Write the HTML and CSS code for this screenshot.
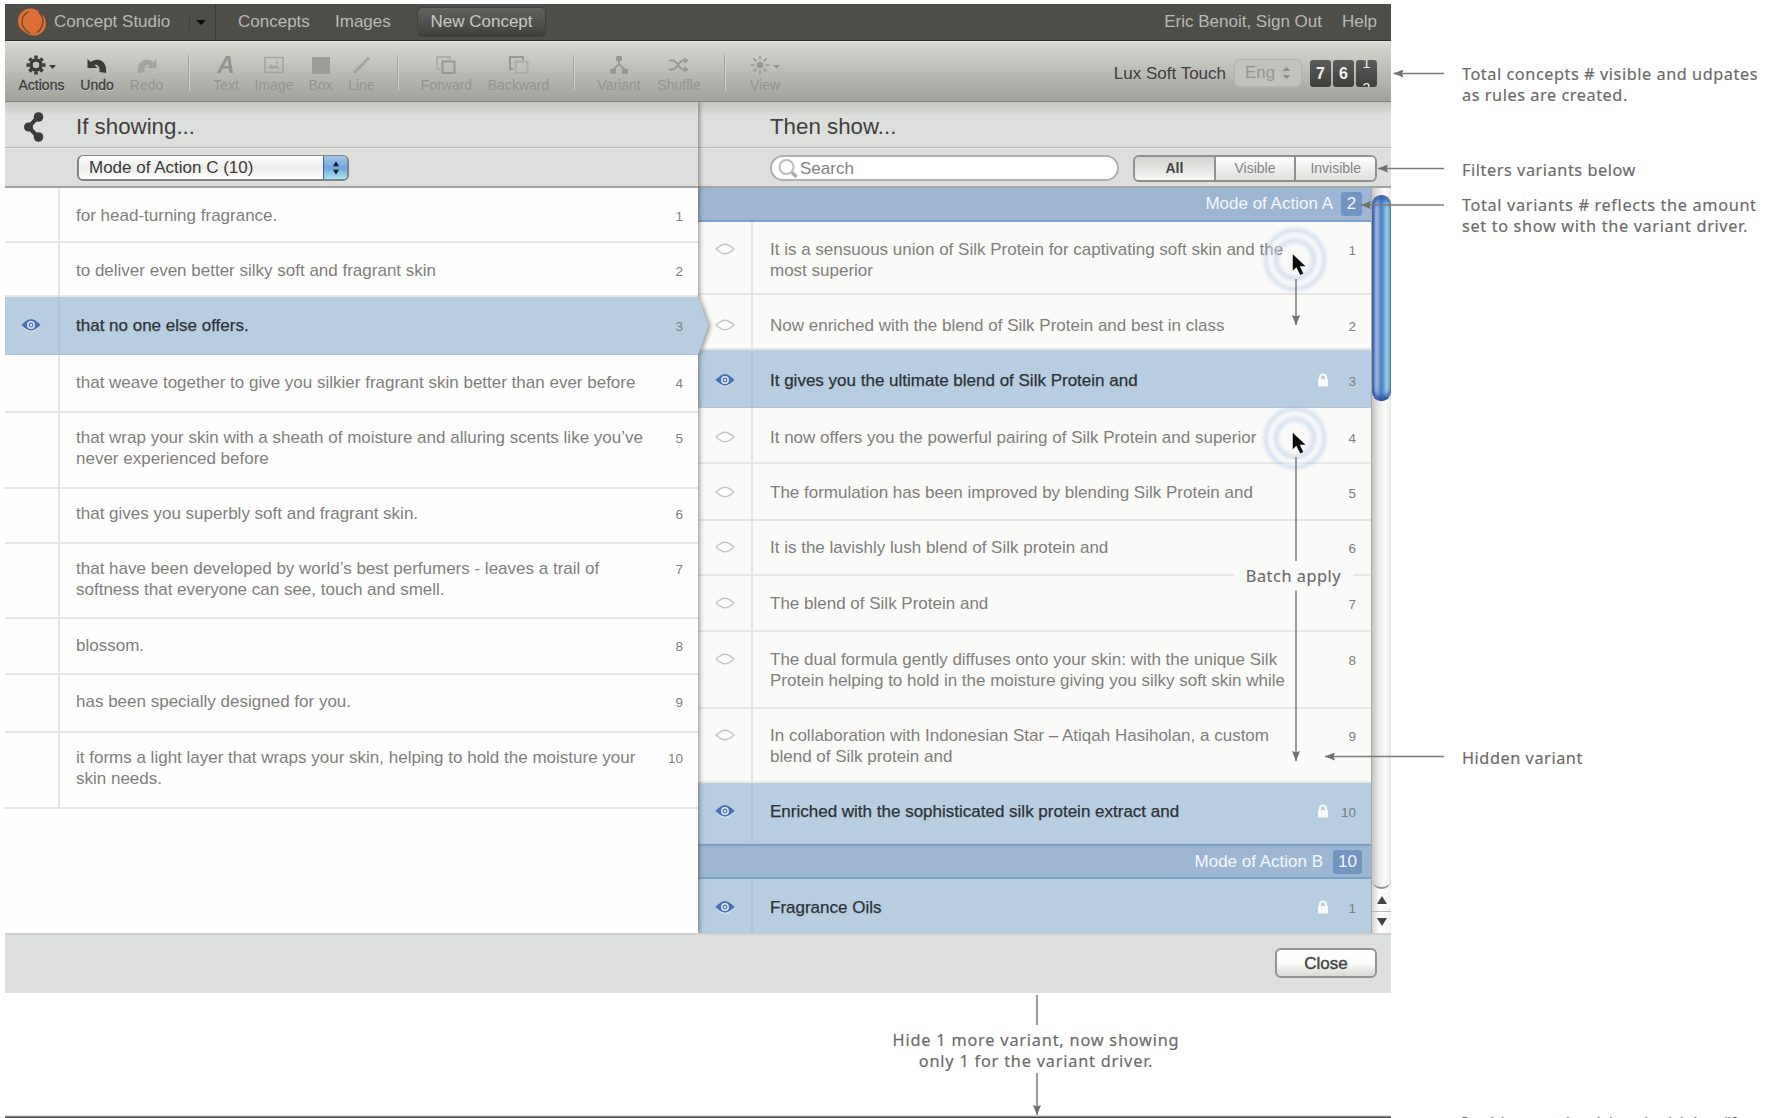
FILE: index.html
```html
<!DOCTYPE html>
<html lang="en">
<head>
<meta charset="utf-8">
<title>Concept Studio</title>
<link rel="stylesheet" href="styles.css">
</head>
<body>
<svg class="defs" width="0" height="0">
  <defs>
    <symbol id="eye" viewBox="0 0 20 14"><path d="M1 8.200C5 4.200 7 3 10 3s5 1.200 9 5.200C15 12.200 13 13.500 10 13.500S5 12.200 1 8.200Z" fill="#e6eff7"/><path d="M.5 7C4.500 3 7 1.300 10 1.300S15.500 3 19.500 7c-4 4-6.500 5.500-9.500 5.500S4.500 11 .5 7Z" fill="#4a70b0"/><circle cx="10" cy="7" r="3.200" fill="none" stroke="#dfe9f5" stroke-width="1.500"/><circle cx="10" cy="7" r="1.200" fill="#dfe9f5"/></symbol>
    <symbol id="eye-off" viewBox="0 0 20 14"><path d="M1 7C5 3.500 7.500 2.200 10 2.200S15 3.500 19 7c-4 3.500-6.500 4.800-9 4.800S5 10.500 1 7Z" fill="#fff" stroke="#c6c6c1" stroke-width="1.500"/></symbol>
    <symbol id="lock" viewBox="0 0 12 14"><path d="M1 6h1V4.500a4 4 0 0 1 8 0V6h1v7.500H1ZM4 6h4V4.500a2 2 0 0 0-4 0Z" fill="#f6fafd"/></symbol>
    <symbol id="cursor" viewBox="0 0 13 21"><path d="M0 0v17l3.800-3.700 4 7.700 3-1.500-3.500-7.200H13Z" fill="#0c0c0c"/></symbol>
  </defs>
</svg>

<div class="app">
  <nav class="topbar">
    <svg class="logo" width="30" height="28" viewBox="0 0 30 28"><circle cx="13.500" cy="13" r="12.500" fill="#df6f35"/><circle cx="17" cy="15.500" r="12" fill="#df6f35"/><g fill="none" stroke="#5b4436" stroke-width="1.200"><path d="M11.500 3.500C2 9 3 20 13.500 25.500M22 4.500c6 6 5 15-2 20"/></g></svg>
    <span class="brand">Concept Studio</span>
    <span class="brand-menu"><i class="caret"></i></span>
    <a class="link-concepts">Concepts</a>
    <a class="link-images">Images</a>
    <a class="new-concept">New Concept</a>
    <span class="account">Eric Benoit, Sign Out</span>
    <a>Help</a>
  </nav>

  <div class="toolbar">
    <div class="tools">
      <div class="tool on"><svg width="36" height="22" viewBox="0 0 36 22"><g transform="translate(13 11)" fill="none" stroke="#3b3b39"><circle r="5" stroke-width="3.500"/><path stroke-width="3.500" d="M0-9.500v3M0 9.500v-3M-9.500 0h3M9.500 0h-3M-6.600-6.600l2 2M6.600 6.600l-2-2M-6.600 6.600l2-2M6.600-6.600l-2 2"/></g><path d="M26 11h7l-3.500 4Z" fill="#3b3b39"/></svg>Actions</div>
      <div class="tool on"><svg width="22" height="22" viewBox="0 0 22 22"><path d="M1.500 5v9h10L8.500 11c3-.8 5.500 1.500 5 7l6.500 1C21.500 8.500 14 2 4.500 8Z" fill="#3b3b39"/></svg>Undo</div>
      <div class="tool"><svg width="22" height="22" viewBox="0 0 22 22"><path d="M20.500 5v9h-10L13.500 11c-3-.8-5.500 1.500-5 7L2 19C.5 8.500 8 2 17.500 8Z" fill="#a3a39f"/></svg>Redo</div>
      <i class="sep"></i>
      <div class="tool"><span class="glyph-a">A</span>Text</div>
      <div class="tool"><svg width="22" height="22" viewBox="0 0 22 22"><rect x="2" y="3.500" width="18" height="15" fill="none" stroke="#a3a39f" stroke-width="1.500"/><path d="M5 14.500l3-4 3 2.500 2-2 4 3.500Z" fill="#a3a39f"/><circle cx="14" cy="8.500" r="1.300" fill="#a3a39f"/></svg>Image</div>
      <div class="tool"><svg width="22" height="22" viewBox="0 0 22 22"><path d="M2 3h18v17H2Z" fill="#9c9c98"/></svg>Box</div>
      <div class="tool"><svg width="22" height="22" viewBox="0 0 22 22"><path d="M3 19L18 3.500" stroke="#a3a39f" stroke-width="3"/></svg>Line</div>
      <i class="sep"></i>
      <div class="tool"><svg width="22" height="22" viewBox="0 0 22 22" fill="none" stroke-width="2"><path d="M5 15H2V3h13v3" stroke="#adada9"/><rect x="7.500" y="7.500" width="12" height="11.500" stroke="#979793"/></svg>Forward</div>
      <div class="tool"><svg width="22" height="22" viewBox="0 0 22 22" fill="none" stroke-width="2"><path d="M5 15H2V3h13v3" stroke="#979793"/><rect x="7.500" y="7.500" width="12" height="11.500" stroke="#adada9"/></svg>Backward</div>
      <i class="sep"></i>
      <div class="tool"><svg width="22" height="22" viewBox="0 0 22 22"><g fill="#979793"><rect x="8" y="2" width="6" height="5" rx="1"/><rect x="2" y="15" width="6" height="5" rx="1"/><rect x="14" y="15" width="6" height="5" rx="1"/></g><path d="M11 6v5M5 16l6-6 6 6" fill="none" stroke="#979793" stroke-width="1.800"/></svg>Variant</div>
      <div class="tool"><svg width="22" height="22" viewBox="0 0 22 22"><path d="M1 6.500h4c4 0 6 9 10 9h2M1 15.500h4c4 0 6-9 10-9h2" fill="none" stroke="#979793" stroke-width="1.800"/><path d="M16 3.500l5 3-5 3ZM16 12.500l5 3-5 3Z" fill="#979793"/></svg>Shuffle</div>
      <i class="sep"></i>
      <div class="tool"><svg width="32" height="22" viewBox="0 0 32 22"><g transform="translate(11 11)"><circle r="3.300" fill="#979793"/><path d="M0-9.500v4M0 9.500v-4M-9.500 0h4M9.500 0h-4M-6.600-6.600l3 3M6.600 6.600l-3-3M-6.600 6.600l3-3M6.600-6.600l-3 3" stroke="#979793" stroke-width="1.600"/></g><path d="M24 11h7l-3.500 4Z" fill="#979793"/></svg>View</div>
    </div>
    <div class="project">
      <span class="project-name">Lux Soft Touch</span>
      <span class="lang">Eng<svg width="9" height="14" viewBox="0 0 9 14"><path d="M.5 5L4.500 1l4 4ZM.5 9l4 4 4-4Z" fill="#8d8d89"/></svg></span>
      <span class="counter"><b>7</b><b>6</b><b class="rolling"><i>1</i><i>2</i></b></span>
    </div>
  </div>

  <main class="panes">
    <section class="pane left">
      <h2><svg width="22" height="32" viewBox="0 0 22 32"><path d="M15 6L5.500 16 15 26" fill="none" stroke="#3b3b39" stroke-width="4"/><circle cx="15.500" cy="6" r="4.800" fill="#3b3b39"/><circle cx="5.500" cy="16" r="4.500" fill="#3b3b39"/><circle cx="15.500" cy="26" r="4.800" fill="#3b3b39"/></svg>If showing...</h2>
      <div class="controls">
        <div class="select"><span>Mode of Action C (10)</span><i><svg width="8" height="14" viewBox="0 0 8 14"><path d="M1 5.200L4 .5l3 4.700ZM1 8.800l3 4.700 3-4.700Z" fill="#111"/></svg></i></div>
      </div>
      <div class="rows">
        <div class="row"><div class="vis"></div><p>for head-turning fragrance.</p><span class="num">1</span></div>
        <div class="row"><div class="vis"></div><p>to deliver even better silky soft and fragrant skin</p><span class="num">2</span></div>
        <div class="row sel"><div class="vis"><svg><use href="#eye"/></svg></div><p>that no one else offers.</p><span class="num">3</span><svg class="notch" width="18" height="60" viewBox="0 0 18 60"><path d="M0 1L10.500 29.500 0 59Z" fill="#b7cde1"/></svg></div>
        <div class="row"><div class="vis"></div><p>that weave together to give you silkier fragrant skin better than ever before</p><span class="num">4</span></div>
        <div class="row"><div class="vis"></div><p>that wrap your skin with a sheath of moisture and alluring scents like you’ve<br>never experienced before</p><span class="num">5</span></div>
        <div class="row"><div class="vis"></div><p>that gives you superbly soft and fragrant skin.</p><span class="num">6</span></div>
        <div class="row"><div class="vis"></div><p>that have been developed by world’s best perfumers - leaves a trail of<br>softness that everyone can see, touch and smell.</p><span class="num">7</span></div>
        <div class="row"><div class="vis"></div><p>blossom.</p><span class="num">8</span></div>
        <div class="row"><div class="vis"></div><p>has been specially designed for you.</p><span class="num">9</span></div>
        <div class="row"><div class="vis"></div><p>it forms a light layer that wraps your skin, helping to hold the moisture your<br>skin needs.</p><span class="num">10</span></div>
      </div>
    </section>

    <section class="pane right">
      <h2>Then show...</h2>
      <div class="controls">
        <div class="search"><svg width="22" height="22" viewBox="0 0 22 22"><circle cx="9.500" cy="9" r="7" fill="none" stroke="#bdbdb9" stroke-width="2"/><path d="M14.500 14l5 5" stroke="#b3ada8" stroke-width="3.200"/></svg>Search</div>
        <div class="segments"><span class="active">All</span><span>Visible</span><span>Invisible</span></div>
      </div>
      <div class="list">
        <div class="rows">
          <div class="group">Mode of Action A<b>2</b></div>
          <div class="row"><div class="vis"><svg><use href="#eye-off"/></svg></div><p>It is a sensuous union of Silk Protein for captivating soft skin and the<br>most superior</p><span class="num">1</span></div>
          <div class="row"><div class="vis"><svg><use href="#eye-off"/></svg></div><p>Now enriched with the blend of Silk Protein and best in class</p><span class="num">2</span></div>
          <div class="row sel"><div class="vis"><svg><use href="#eye"/></svg></div><p>It gives you the ultimate blend of Silk Protein and</p><span class="num"><svg><use href="#lock"/></svg>3</span></div>
          <div class="row"><div class="vis"><svg><use href="#eye-off"/></svg></div><p>It now offers you the powerful pairing of Silk Protein and superior</p><span class="num">4</span></div>
          <div class="row"><div class="vis"><svg><use href="#eye-off"/></svg></div><p>The formulation has been improved by blending Silk Protein and</p><span class="num">5</span></div>
          <div class="row"><div class="vis"><svg><use href="#eye-off"/></svg></div><p>It is the lavishly lush blend of Silk protein and</p><span class="num">6</span></div>
          <div class="row"><div class="vis"><svg><use href="#eye-off"/></svg></div><p>The blend of Silk Protein and</p><span class="num">7</span></div>
          <div class="row"><div class="vis"><svg><use href="#eye-off"/></svg></div><p>The dual formula gently diffuses onto your skin: with the unique Silk<br>Protein helping to hold in the moisture giving you silky soft skin while</p><span class="num">8</span></div>
          <div class="row"><div class="vis"><svg><use href="#eye-off"/></svg></div><p>In collaboration with Indonesian Star – Atiqah Hasiholan, a custom<br>blend of Silk protein and</p><span class="num">9</span></div>
          <div class="row sel"><div class="vis"><svg><use href="#eye"/></svg></div><p>Enriched with the sophisticated silk protein extract and</p><span class="num"><svg><use href="#lock"/></svg>10</span></div>
          <div class="group">Mode of Action B<b>10</b></div>
          <div class="row sel"><div class="vis"><svg><use href="#eye"/></svg></div><p>Fragrance Oils</p><span class="num"><svg><use href="#lock"/></svg>1</span></div>
        </div>
        <div class="scrollbar">
          <div class="track"><div class="thumb"></div></div>
          <div class="step"><svg width="10" height="8" viewBox="0 0 10 8"><path d="M5 0l5 8H0Z" fill="#444"/></svg></div>
          <div class="step"><svg width="10" height="8" viewBox="0 0 10 8"><path d="M5 8L0 0h10Z" fill="#444"/></svg></div>
        </div>
      </div>
    </section>
  </main>

  <footer><button type="button">Close</button></footer>
</div>

<svg class="marks" width="1776" height="1118" viewBox="0 0 1776 1118">
  <defs>
    <marker id="head" viewBox="0 0 10 8" refX="10" refY="4" markerWidth="10" markerHeight="8" markerUnits="userSpaceOnUse" orient="auto"><path d="M10 4L0 0l1.500 4L0 8Z" fill="#6f6f6f"/></marker>
    <filter id="glow" x="-30%" y="-30%" width="160%" height="160%"><feGaussianBlur stdDeviation="2"/></filter>
  </defs>
  <g class="rings">
    <g transform="translate(1295 259.500)"><circle r="29" class="halo"/><circle r="23.300" class="band"/><circle r="19" class="halo"/></g>
    <g transform="translate(1295 438)"><circle r="29" class="halo"/><circle r="23.300" class="band"/><circle r="19" class="halo"/></g>
  </g>
  <use href="#cursor" x="1292.500" y="254" width="13" height="21"/>
  <use href="#cursor" x="1292.500" y="432.500" width="13" height="21"/>
  <g class="arrows">
    <path d="M1444 73.500H1393.500"/>
    <path d="M1444 168.500H1378"/>
    <path d="M1444 205H1361"/>
    <path d="M1444 756.500H1325"/>
    <path d="M1296 279v46"/>
    <path d="M1296 590.500V761"/>
    <path d="M1037 1073v42"/>
  </g>
  <path class="stem" d="M1296 457v104M1037 995v30"/>
  <path d="M5 1116h1386" stroke="#b5b5b3"/>
  <path d="M5 1117.500h1386" stroke="#454543" stroke-width="2"/>
</svg>
<p class="note n-concepts">Total concepts # visible and udpates<br>as rules are created.</p>
<p class="note n-filters">Filters variants below</p>
<p class="note n-variants">Total variants # reflects the amount<br>set to show with the variant driver.</p>
<p class="note n-hidden">Hidden variant</p>
<p class="note n-batch">Batch apply</p>
<p class="note n-next">Hide 1 more variant, now showing<br>only 1 for the variant driver.</p>
<p class="note n-cut">In this case the driver is driving “f</p>
</body>
</html>
```
FILE: styles.css
```css
* { box-sizing: border-box; }

body {
  margin: 0;
  position: relative;
  width: 1776px;
  height: 1118px;
  overflow: hidden;
  background: #fff;
  font-family: "Liberation Sans", Arial, sans-serif;
  font-size: 17px;
  color: #7f7f7b;
}

h2, p { margin: 0; font-weight: normal; }
svg { display: block; flex: none; }
.defs { position: absolute; }

.app {
  width: 1386px;
  height: 989px;
  margin: 4px 0 0 5px;
  display: flex;
  flex-direction: column;
}

/* Navigation bar */
.topbar {
  flex: none;
  height: 37px;
  display: flex;
  align-items: center;
  padding: 0 14px 0 12px;
  background: #4e4e49;
  border-bottom: 1px solid #2b2b29;
  color: #b9b9b5;
  white-space: nowrap;
}
.brand { margin-left: 7px; width: 117px; }
.brand-menu {
  width: 27px;
  height: 36px;
  margin-left: 18px;
  display: flex;
  align-items: center;
  padding-left: 7px;
  border-right: 1px solid #3c3c39;
  background: linear-gradient(#3f3f3c, #3f3f3c) 0 50% / 1px 18px no-repeat;
}
.caret { border: 5px solid transparent; border-top-color: #0b0b0b; border-bottom: 0; }
.link-concepts { margin-left: 22px; width: 97px; }
.link-images { width: 82px; }
.new-concept {
  width: 129px;
  height: 30px;
  line-height: 28px;
  text-align: center;
  border: 1px solid #40403d;
  border-radius: 5px;
  background: linear-gradient(#62625e, #3f3f3c);
  color: #c8c8c4;
}
.account { margin-left: auto; margin-right: 20px; }

/* Toolbar */
.toolbar {
  flex: none;
  height: 61px;
  display: flex;
  align-items: stretch;
  justify-content: space-between;
  padding: 0 14px 0 9px;
  background: linear-gradient(#d7d8d2, #bcbcb7 50%, #a2a29d);
  border-top: 1px solid #e3e3de;
  border-bottom: 1px solid #85857f;
}
.tools {
  display: grid;
  grid-template-columns: 55px 56px 43px 42px 32px 64px 29px 53px 20px 77px 67px 43px 48px 72px 20px 60px;
  justify-items: center;
}
.tool {
  display: flex;
  flex-direction: column;
  align-items: center;
  padding-top: 12px;
  font-size: 14px;
  line-height: 16px;
  color: #949490;
  white-space: nowrap;
}
.tool svg, .glyph-a { margin-bottom: 1px; }
.tool.on { color: #3b3b39; -webkit-text-stroke: .3px; text-shadow: 0 1px 0 #d5d5d1; }
.glyph-a { height: 22px; font: italic bold 24px/22px "Liberation Sans", sans-serif; }
.sep {
  width: 2px;
  height: 35px;
  margin-top: 13px;
  border-left: 1px solid #a5a5a0;
  border-right: 1px solid #d0d0cb;
}
.project { display: flex; align-items: center; color: #3d3d3b; padding-bottom: 1px; margin-top: 4px; }
.project-name { margin-right: 8px; padding-top: 1px; }
.lang {
  width: 68px;
  height: 28px;
  display: flex;
  align-items: center;
  justify-content: center;
  gap: 7px;
  margin-right: 8px;
  border: 1px solid #b2b2ad;
  border-radius: 5px;
  background: #c2c2bd;
  color: #969692;
}
.counter { display: flex; gap: 2px; }
.counter b {
  width: 21px;
  height: 27px;
  border-radius: 3px;
  background: linear-gradient(#5c5c59, #3d3d3b);
  color: #f1f1ef;
  font-size: 16px;
  line-height: 27px;
  text-align: center;
}
.counter .rolling { overflow: hidden; font-size: 14px; font-weight: normal; line-height: 20px; }
.rolling i { display: block; font-style: normal; height: 20px; margin-top: -7px; }
.rolling i + i { margin-top: 5px; }

/* Panes */
.panes { flex: none; height: 831px; display: flex; }
.pane { display: flex; flex-direction: column; }
.left { width: 693px; position: relative; z-index: 1; background: #fefefe; box-shadow: 1px 0 5px rgba(50, 50, 45, .6); clip-path: inset(0 -20px 0 0); }
.right { width: 693px; }

h2 {
  flex: none;
  height: 46px;
  display: flex;
  align-items: center;
  font-size: 22.300px;
  color: #40403e;
  padding-top: 5px;
  background: linear-gradient(#c5c6c2, #dddfdc 14px);
  border-bottom: 1px solid #b8b8b5;
}
.left h2 { padding-left: 18px; gap: 31px; }
.right h2 { padding-left: 72px; }
.controls {
  flex: none;
  height: 40px;
  display: flex;
  align-items: center;
  padding-top: 1px;
  background: #dddfdc;
  border-top: 1px solid #ebecea;
  border-bottom: 2px solid #a3a5a1;
}
.left .controls { padding-left: 72px; }
.right .controls { padding-left: 72px; }

.select {
  width: 272px;
  height: 26px;
  display: flex;
  align-items: stretch;
  border: 2px solid #848480;
  border-top-width: 1px;
  border-radius: 6px;
  overflow: hidden;
  background: linear-gradient(#fff, #ececea 50%, #fff);
  color: #3a3a38;
  line-height: 23px;
}
.select span { flex: 1; padding-left: 10px; }
.select i {
  width: 26px;
  margin: -1px -2px -2px 0;
  padding-bottom: 1px;
  display: flex;
  align-items: center;
  justify-content: center;
  border: 1px solid #3c5ca8;
  border-bottom-color: #4b7590;
  border-radius: 0 6px 6px 0;
  background: linear-gradient(#a7c5ea, #6ba7df 50%, #a8ecf6);
}
.search {
  width: 349px;
  height: 26px;
  display: flex;
  align-items: center;
  gap: 1px;
  padding: 1px 0 0 5px;
  border: 2px solid #b0b0ad;
  border-radius: 13px;
  background: #fff;
  color: #83837f;
}
.segments {
  width: 244px;
  height: 27px;
  margin-left: 14px;
  display: flex;
  border: 2px solid #90908c;
  border-radius: 6px;
  overflow: hidden;
  font-size: 14px;
  line-height: 23px;
  text-align: center;
}
.segments span { flex: 1; background: linear-gradient(#fff, #dfdfdd); color: #84847f; }
.segments span + span { border-left: 2px solid #90908c; }
.segments .active { background: linear-gradient(#d2d3ce, #f8f8f7); color: #444; font-weight: bold; }

/* Lists */
.rows { display: grid; --rule: #e6e7e5; }
.left .rows { grid-template-rows: 55px 54px 58px 58px 76px 55px 75px 56px 58px 76px; }
.right .rows { flex: 1; grid-template-rows: 34px 73px 55px 58px 56px 57px 55px 56px 77px 74px 61px 35px 54px; }
.row {
  --drop: 18px;
  position: relative;
  display: grid;
  grid-template-columns: 54px 1fr auto;
  border-bottom: 2px solid var(--rule);
  line-height: 20.500px;
  white-space: nowrap;
}
.right .row { background: #fafaf9; }
.left .row:nth-child(n+5) { --drop: 15px; }
.left .row:nth-child(8), .left .row:nth-child(9) { --drop: 17px; }
.left .row.sel { --drop: 19px; }
.right .row:nth-child(3), .right .row:nth-child(4) { --drop: 21px; }
.right .row:nth-child(5) { --drop: 20px; }
.right .row:nth-child(6), .right .row:nth-child(n+11) { --drop: 19px; }
.right .row:nth-child(7) { --drop: 17px; }
.right .row:nth-child(10) { --drop: 17px; }

.vis { width: 55px; padding: calc(var(--drop) + 2px) 0 0 17px; border-right: 2px solid var(--rule); }
.vis svg { width: 20px; height: 14px; }
.left .vis { padding-left: 16px; }
.row p { padding: var(--drop) 0 0 17px; }
.right .row p { padding-left: 18px; }
.num {
  display: flex;
  gap: 14px;
  align-items: center;
  align-self: start;
  padding: var(--drop) 15px 0 0;
  font-size: 13.500px;
  height: calc(var(--drop) + 22px);
}
.num svg { width: 12px; height: 14px; margin-top: -4px; }
.right .sel .num svg { margin-right: 5px; }
.right .row:nth-child(11) .num svg { margin-right: -2px; }

.row.sel { --rule: #adc3db; background: #b7cde1; border-bottom-width: 1px; border-color: #b1c4d7; color: #2c3237; }
.sel .num { color: #777d83; }
.right .row.sel { background: #b7cde1; }
.sel p { -webkit-text-stroke: .25px; }
.notch { position: absolute; left: 693px; top: -1px; filter: drop-shadow(2px 1px 2px rgba(50, 50, 45, .5)); clip-path: inset(0 -10px 0 0); }

.group {
  display: flex;
  align-items: center;
  justify-content: flex-end;
  gap: 8px;
  padding: 0 9px 0 0;
  background: #9cb6d4;
  border-bottom: 2px solid #7d9fcc;
  color: #f3f8fc;
}
.row + .group { gap: 10px; border-top: 2px solid #7d9fcc; }
.group b {
  min-width: 21px;
  height: 24px;
  padding: 0 5px;
  border-radius: 3px;
  background: #7194c1;
  font-weight: normal;
  line-height: 24px;
  text-align: center;
}

.list { flex: 1; display: flex; }
.scrollbar {
  width: 20px;
  display: flex;
  flex-direction: column;
  background: linear-gradient(90deg, #d4d4d1, #fff 40%, #f4f4f2);
  border-left: 1px solid #aaa9a5;
}
.track {
  height: 701px;
  padding-top: 7px;
  border-radius: 0 0 9px 9px;
  border-bottom: 2px solid #92928f;
  background: linear-gradient(90deg, #c6c6c1, #e9e9e6 35%, #fdfdfd 70%, #e8e8e5);
}
.thumb {
  height: 206px;
  border: 1px solid #42639f;
  border-bottom-color: #243f85;
  border-right-color: #5a7483;
  border-radius: 9px;
  background: linear-gradient(90deg, #4366ae, #98b7e0 18%, #7ba2d5 35%, #4c7fc2 45%, #5b94cc 60%, #91d2e8 80%, #7fb7d0);
  box-shadow: inset 0 7px 5px -3px #2f60b0, inset 0 -7px 5px -3px #2b55a2;
}
.step { flex: 1; display: grid; place-items: center; }
.step + .step { border-top: 1px solid #b8b8b5; }

footer {
  flex: 1;
  display: flex;
  justify-content: flex-end;
  align-items: flex-start;
  padding: 13px 14px 0 0;
  background: #dddfdc;
  border-top: 2px solid #d0d1cc;
}
footer button {
  width: 102px;
  height: 30px;
  padding: 1px 0 0;
  border: 2px solid #93938f;
  border-radius: 6px;
  background: linear-gradient(#fff, #fbfbfa 50%, #d8d8d5);
  color: #444442;
  font: 17px "Liberation Sans", Arial, sans-serif;
  -webkit-text-stroke: .4px;
}

/* Callouts drawn over the screen */
.marks { position: absolute; left: 0; top: 0; z-index: 2; }
.halo { fill: none; stroke: #9fb9dc; stroke-width: 3; opacity: .65; filter: url(#glow); }
.band { fill: none; stroke: #fdfdfd; stroke-width: 9; opacity: .3; }
.arrows path { fill: none; stroke: #7b7b79; stroke-width: 1.500; marker-end: url(#head); }
.stem { stroke: #7b7b79; stroke-width: 1.500; }
.note {
  position: absolute;
  z-index: 3;
  left: 1462px;
  font-family: "Noto Sans", sans-serif;
  font-size: 16.300px;
  line-height: 20.500px;
  letter-spacing: .55px;
  color: #696967;
  -webkit-text-stroke: .15px;
  white-space: nowrap;
}
.n-concepts { top: 64px; }
.n-filters { top: 160px; }
.n-variants { top: 195px; letter-spacing: .65px; }
.n-hidden { top: 748px; }
.n-batch { left: 1234px; top: 561px; width: 119px; height: 29px; line-height: 31px; text-align: center; background: #fafaf9; }
.n-next { left: 886px; top: 1030px; width: 300px; text-align: center; letter-spacing: .8px; }
.n-cut { top: 1113px; }
```
